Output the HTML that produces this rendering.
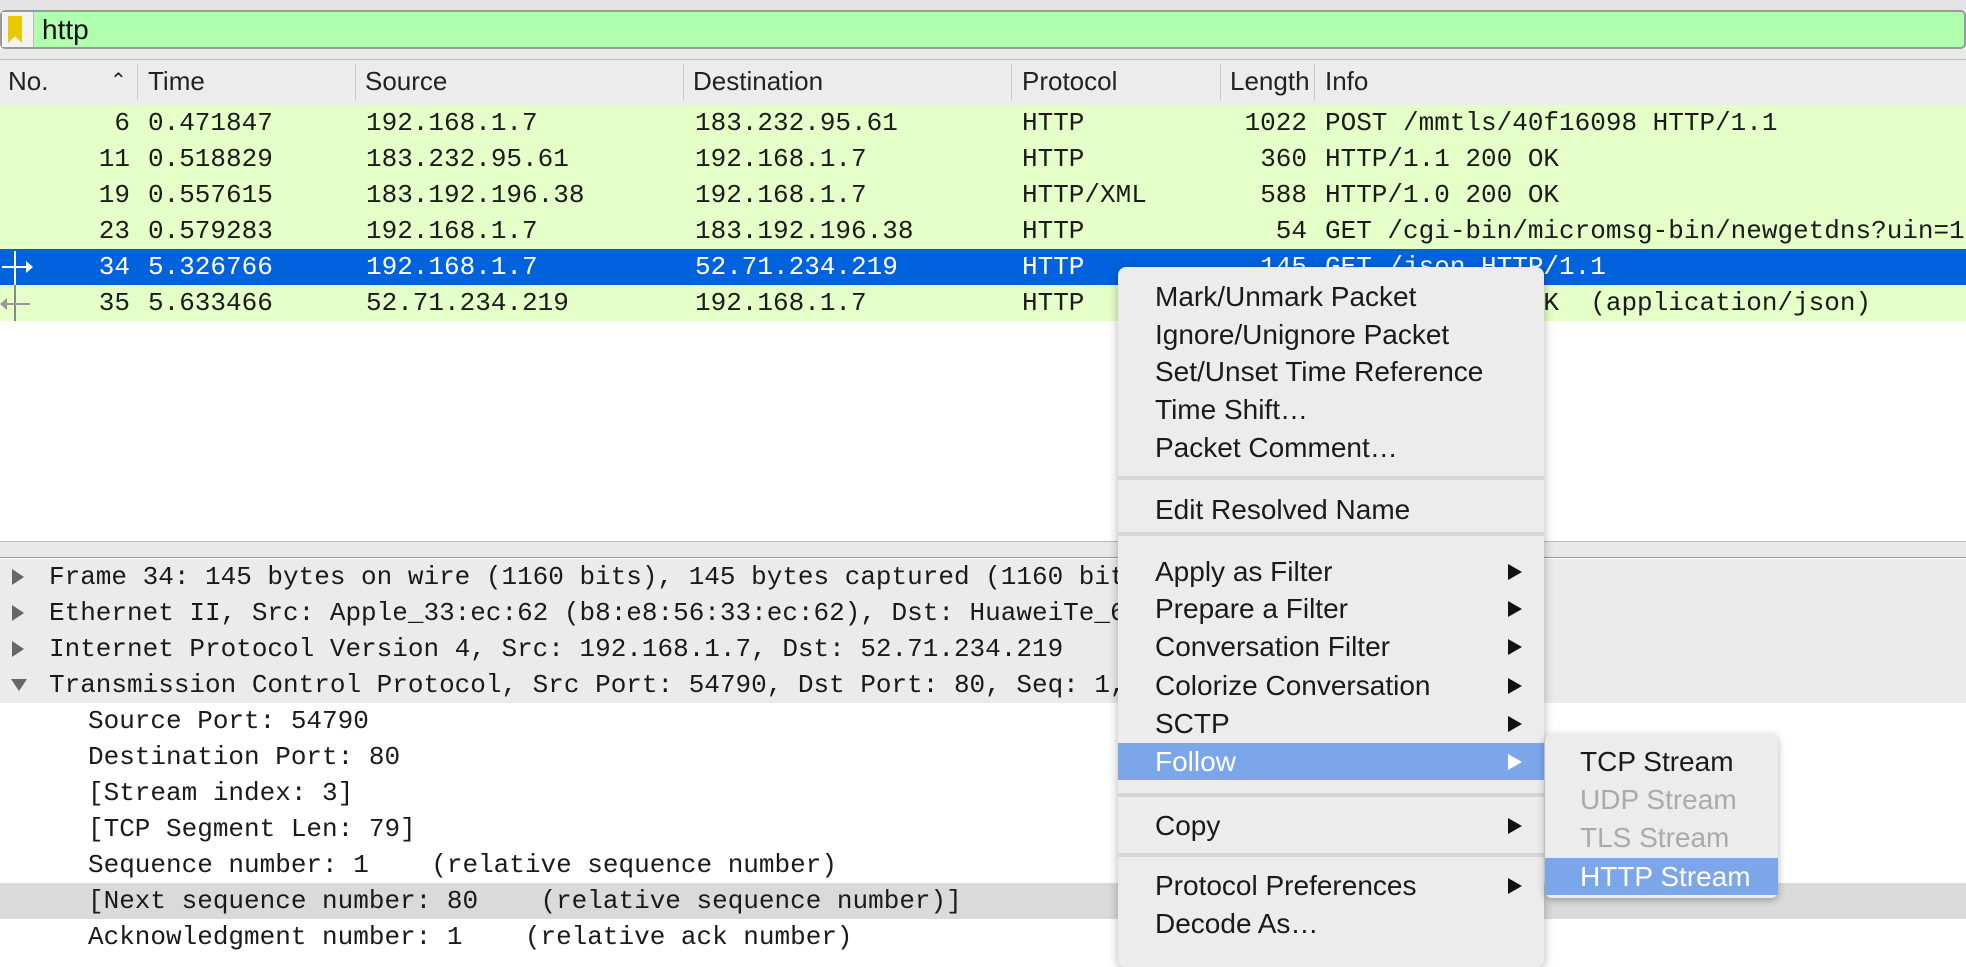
<!DOCTYPE html>
<html><head><meta charset="utf-8"><style>
*{margin:0;padding:0;box-sizing:border-box}
body{width:1966px;height:944px;overflow:hidden;background:#fff;position:relative;font-family:"Liberation Sans",sans-serif}
.abs{position:absolute}
.mono{font-family:"Liberation Mono",monospace;font-size:26px;color:#1a1a1a}
.row{position:absolute;left:0;width:1966px;height:36px;background:#e4ffc7;line-height:36px;white-space:nowrap;overflow:hidden}
.row span{position:absolute;top:0}
.r{text-align:right}
.hd{position:absolute;top:60px;height:43px;line-height:43px;font-size:26px;color:#222}
.dv{position:absolute;top:64px;width:1px;height:36px;background:#c8c8c8}
.dt{position:absolute;left:0;width:1966px;height:36px;line-height:36px;white-space:nowrap;overflow:hidden}
.tri{position:absolute;left:12px;top:10px;width:0;height:0;border-top:8px solid transparent;border-bottom:8px solid transparent;border-left:12px solid #666}
.menu{position:absolute;left:1118px;top:267px;width:426px;height:700px;background:#ececec;border-radius:8px;box-shadow:0 2px 10px rgba(0,0,0,.3);font-size:28px;color:#1a1a1a}
.mi{position:absolute;left:0;width:426px;height:37px;line-height:37px;padding-left:37px}
.sep{position:absolute;left:0;width:426px;height:4px;background:#d6d6d6}
.ar{position:absolute;right:22px;top:11px;width:0;height:0;border-top:8px solid transparent;border-bottom:8px solid transparent;border-left:14px solid #111}
.sub{position:absolute;left:1545px;top:734px;width:233px;height:164px;background:#ececec;border-radius:7px;box-shadow:0 2px 8px rgba(0,0,0,.3);font-size:28px}
.si{position:absolute;left:0;width:233px;height:37px;line-height:37px;padding-left:35px}
</style></head><body>
<div class="abs" style="left:0;top:0;width:1966px;height:10px;background:#e3e3e3"></div>
<div class="abs" style="left:0;top:10px;width:1966px;height:39px;background:#afffaf;border:2px solid #999;border-radius:5px"></div>
<div class="abs" style="left:2px;top:12px;width:32px;height:35px;background:#f3f3f3;border-right:1px solid #bbb"></div>
<div class="abs" style="left:8px;top:16px;width:14px;height:27px;background:#e8c800;clip-path:polygon(0 0,100% 0,100% 100%,50% 75%,0 100%)"></div>
<div class="abs" style="left:42px;top:10px;line-height:39px;font-size:28px;color:#111">http</div>
<div class="abs" style="left:0;top:49px;width:1966px;height:11px;background:#e9e9e9;border-bottom:1px solid #bbb"></div>
<div class="abs" style="left:0;top:60px;width:1966px;height:45px;background:#ececec"></div>
<div class="hd" style="left:8px">No.</div>
<div class="hd" style="left:110px;font-size:20px">&#8963;</div>
<div class="dv" style="left:137px"></div><div class="hd" style="left:148px">Time</div>
<div class="dv" style="left:355px"></div><div class="hd" style="left:365px">Source</div>
<div class="dv" style="left:683px"></div><div class="hd" style="left:693px">Destination</div>
<div class="dv" style="left:1011px"></div><div class="hd" style="left:1022px">Protocol</div>
<div class="dv" style="left:1220px"></div><div class="hd" style="left:1230px">Length</div>
<div class="dv" style="left:1314px"></div><div class="hd" style="left:1325px">Info</div>

<div class="mono">
<div class="row" style="top:105px"><span class="r" style="left:60px;width:70px">6</span><span style="left:148px">0.471847</span><span style="left:366px">192.168.1.7</span><span style="left:695px">183.232.95.61</span><span style="left:1022px">HTTP</span><span class="r" style="left:1200px;width:107px">1022</span><span style="left:1325px">POST /mmtls/40f16098 HTTP/1.1</span></div>
<div class="row" style="top:141px"><span class="r" style="left:60px;width:70px">11</span><span style="left:148px">0.518829</span><span style="left:366px">183.232.95.61</span><span style="left:695px">192.168.1.7</span><span style="left:1022px">HTTP</span><span class="r" style="left:1200px;width:107px">360</span><span style="left:1325px">HTTP/1.1 200 OK</span></div>
<div class="row" style="top:177px"><span class="r" style="left:60px;width:70px">19</span><span style="left:148px">0.557615</span><span style="left:366px">183.192.196.38</span><span style="left:695px">192.168.1.7</span><span style="left:1022px">HTTP/XML</span><span class="r" style="left:1200px;width:107px">588</span><span style="left:1325px">HTTP/1.0 200 OK</span></div>
<div class="row" style="top:213px"><span class="r" style="left:60px;width:70px">23</span><span style="left:148px">0.579283</span><span style="left:366px">192.168.1.7</span><span style="left:695px">183.192.196.38</span><span style="left:1022px">HTTP</span><span class="r" style="left:1200px;width:107px">54</span><span style="left:1325px">GET /cgi-bin/micromsg-bin/newgetdns?uin=1</span></div>
<div class="row" style="top:249px;background:#0062dc;color:#fff"><span class="r" style="left:60px;width:70px">34</span><span style="left:148px">5.326766</span><span style="left:366px">192.168.1.7</span><span style="left:695px">52.71.234.219</span><span style="left:1022px">HTTP</span><span class="r" style="left:1200px;width:107px">145</span><span style="left:1325px">GET /json HTTP/1.1</span></div>
<div class="row" style="top:285px"><span class="r" style="left:60px;width:70px">35</span><span style="left:148px">5.633466</span><span style="left:366px">52.71.234.219</span><span style="left:695px">192.168.1.7</span><span style="left:1022px">HTTP</span><span class="r" style="left:1200px;width:107px">402</span><span style="left:1325px;white-space:pre">HTTP/1.1 200 OK  (application/json)</span></div>
</div>
<div class="abs" style="left:14px;top:251px;width:2px;height:70px;background:#fff"></div>
<div class="abs" style="left:14px;top:285px;width:2px;height:36px;background:#888"></div>
<div class="abs" style="left:2px;top:266px;width:26px;height:2px;background:#fff"></div>
<div class="abs" style="left:26px;top:261px;border-top:6px solid transparent;border-bottom:6px solid transparent;border-left:7px solid #fff"></div>
<div class="abs" style="left:4px;top:303px;width:26px;height:2px;background:#999"></div>
<div class="abs" style="left:0;top:298px;border-top:6px solid transparent;border-bottom:6px solid transparent;border-right:7px solid #999"></div>

<div class="abs" style="left:0;top:541px;width:1966px;height:17px;background:#e9e9e9;border-top:1px solid #bbb;border-bottom:1px solid #999"></div>
<div class="mono">
<div class="dt" style="top:559px;background:#ebebeb"><div class="tri"></div><span class="abs" style="left:49px">Frame 34: 145 bytes on wire (1160 bits), 145 bytes captured (1160 bits)</span></div>
<div class="dt" style="top:595px;background:#ebebeb"><div class="tri"></div><span class="abs" style="left:49px">Ethernet II, Src: Apple_33:ec:62 (b8:e8:56:33:ec:62), Dst: HuaweiTe_6</span></div>
<div class="dt" style="top:631px;background:#ebebeb"><div class="tri"></div><span class="abs" style="left:49px">Internet Protocol Version 4, Src: 192.168.1.7, Dst: 52.71.234.219</span></div>
<div class="dt" style="top:667px;background:#ebebeb"><div class="abs" style="left:11px;top:12px;border-left:8px solid transparent;border-right:8px solid transparent;border-top:12px solid #666"></div><span class="abs" style="left:49px">Transmission Control Protocol, Src Port: 54790, Dst Port: 80, Seq: 1,</span></div>
<div class="dt" style="top:703px"><span class="abs" style="left:88px">Source Port: 54790</span></div>
<div class="dt" style="top:739px"><span class="abs" style="left:88px">Destination Port: 80</span></div>
<div class="dt" style="top:775px"><span class="abs" style="left:88px">[Stream index: 3]</span></div>
<div class="dt" style="top:811px"><span class="abs" style="left:88px">[TCP Segment Len: 79]</span></div>
<div class="dt" style="top:847px"><span class="abs" style="left:88px;white-space:pre">Sequence number: 1    (relative sequence number)</span></div>
<div class="dt" style="top:883px;background:#dadada"><span class="abs" style="left:88px;white-space:pre">[Next sequence number: 80    (relative sequence number)]</span></div>
<div class="dt" style="top:919px"><span class="abs" style="left:88px;white-space:pre">Acknowledgment number: 1    (relative ack number)</span></div>
</div>

<div class="menu">
<div class="mi" style="top:11px">Mark/Unmark Packet</div>
<div class="mi" style="top:49px">Ignore/Unignore Packet</div>
<div class="mi" style="top:86px">Set/Unset Time Reference</div>
<div class="mi" style="top:124px">Time Shift…</div>
<div class="mi" style="top:162px">Packet Comment…</div>
<div class="sep" style="top:209px"></div>
<div class="mi" style="top:224px">Edit Resolved Name</div>
<div class="sep" style="top:265px"></div>
<div class="mi" style="top:286px">Apply as Filter<div class="ar"></div></div>
<div class="mi" style="top:323px">Prepare a Filter<div class="ar"></div></div>
<div class="mi" style="top:361px">Conversation Filter<div class="ar"></div></div>
<div class="mi" style="top:400px">Colorize Conversation<div class="ar"></div></div>
<div class="mi" style="top:438px">SCTP<div class="ar"></div></div>
<div class="mi" style="top:476px;background:#7ba6ea;color:#fff">Follow<div class="ar" style="border-left-color:#fff"></div></div>
<div class="sep" style="top:526px"></div>
<div class="mi" style="top:540px">Copy<div class="ar"></div></div>
<div class="sep" style="top:586px"></div>
<div class="mi" style="top:600px">Protocol Preferences<div class="ar"></div></div>
<div class="mi" style="top:638px">Decode As…</div>
</div>
<div class="sub">
<div class="si" style="top:9px;color:#1a1a1a">TCP Stream</div>
<div class="si" style="top:47px;color:#aaa">UDP Stream</div>
<div class="si" style="top:85px;color:#aaa">TLS Stream</div>
<div class="si" style="top:124px;background:#7ba6ea;color:#fff">HTTP Stream</div>
</div>
</body></html>
